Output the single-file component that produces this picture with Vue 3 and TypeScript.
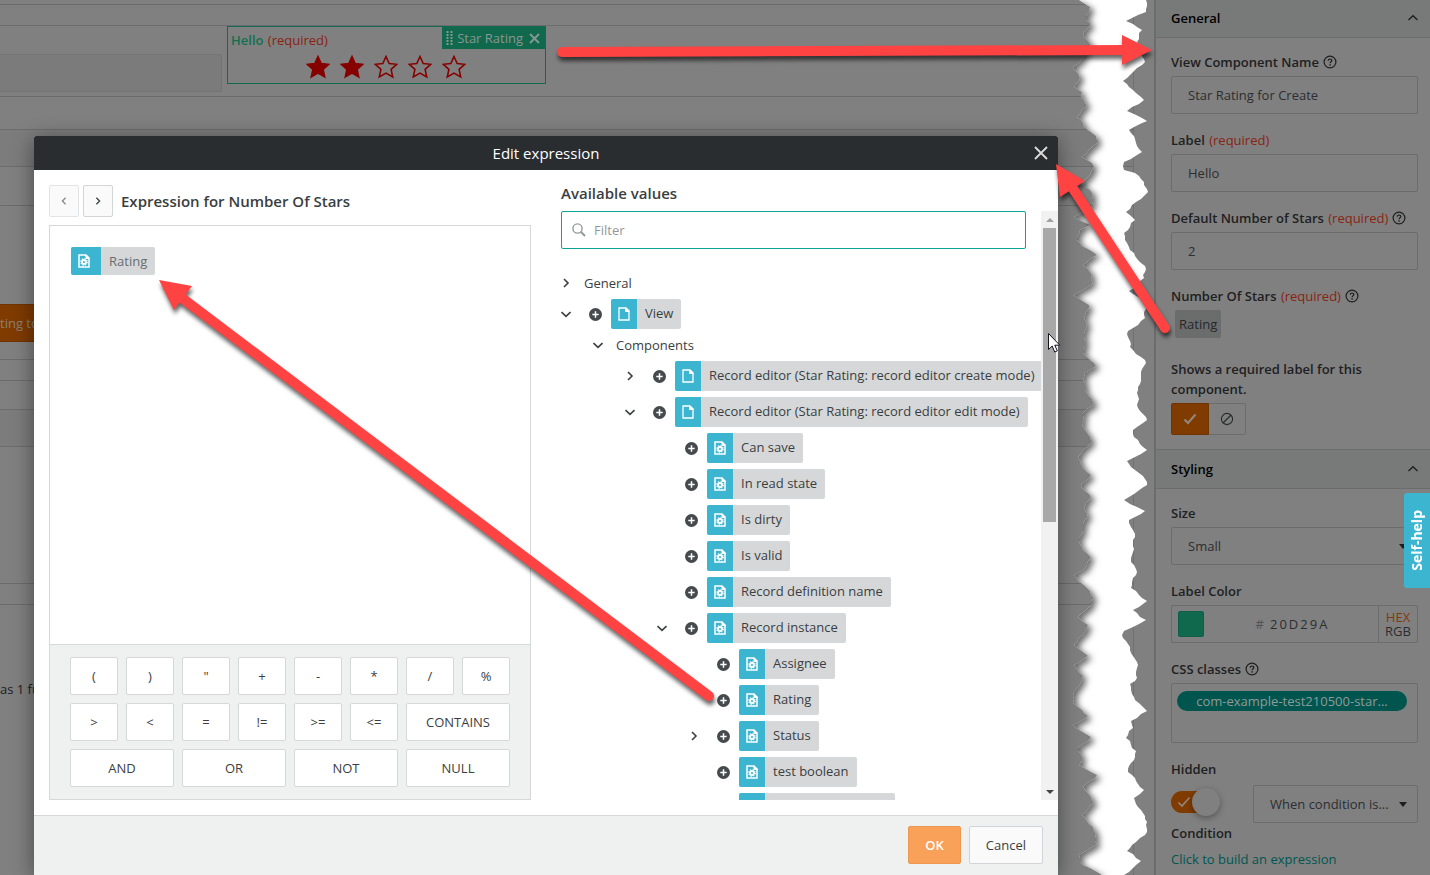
<script setup lang="ts">
import { ref } from 'vue'

type Caret = 'open' | 'closed' | 'none'
type Kind = 'group' | 'page' | 'field'
interface TreeRow {
  label: string
  level: number
  caret: Caret
  kind: Kind
}

const rows: TreeRow[] = [
  { label: 'General', level: 0, caret: 'closed', kind: 'group' },
  { label: 'View', level: 0, caret: 'open', kind: 'page' },
  { label: 'Components', level: 1, caret: 'open', kind: 'group' },
  { label: 'Record editor (Star Rating: record editor create mode)', level: 2, caret: 'closed', kind: 'page' },
  { label: 'Record editor (Star Rating: record editor edit mode)', level: 2, caret: 'open', kind: 'page' },
  { label: 'Can save', level: 3, caret: 'none', kind: 'field' },
  { label: 'In read state', level: 3, caret: 'none', kind: 'field' },
  { label: 'Is dirty', level: 3, caret: 'none', kind: 'field' },
  { label: 'Is valid', level: 3, caret: 'none', kind: 'field' },
  { label: 'Record definition name', level: 3, caret: 'none', kind: 'field' },
  { label: 'Record instance', level: 3, caret: 'open', kind: 'field' },
  { label: 'Assignee', level: 4, caret: 'none', kind: 'field' },
  { label: 'Rating', level: 4, caret: 'none', kind: 'field' },
  { label: 'Status', level: 4, caret: 'closed', kind: 'field' },
  { label: 'test boolean', level: 4, caret: 'none', kind: 'field' },
]

const operators: { text: string; wide: boolean }[] = [
  ...['(', ')', '"', '+', '-', '*', '/', '%', '>', '<', '=', '!=', '>=', '<='].map((text) => ({ text, wide: false })),
  ...['CONTAINS', 'AND', 'OR', 'NOT', 'NULL'].map((text) => ({ text, wide: true })),
]

const stars = [true, true, false, false, false]
const starPath = 'M12 1.5l3.2 7 7.5.8-5.6 5.1 1.6 7.5-6.7-3.8-6.7 3.8 1.6-7.5-5.6-5.1 7.5-.8z'

const filter = ref('')
const componentName = ref('Star Rating for Create')
const labelText = ref('Hello')
const defaultStars = ref('2')
const color = ref('20D29A')
const hidden = ref(true)

type Point = [number, number]

// Edges of the torn strip, measured from the strip's own left side.
const leftEdge: Point[] = [
  [9, 0], [15, 4], [20, 7], [19, 12], [16, 20], [21, 24], [14, 32], [15, 38], [21, 47], [12, 59], [3, 67], [8, 73],
  [10, 78], [4, 87], [12, 92], [11, 97], [17, 106], [12, 110], [7, 117], [13, 123], [18, 130], [26, 136], [27, 143],
  [12, 157], [22, 163], [24, 167], [21, 172], [17, 178], [13, 184], [22, 193], [24, 205], [4, 217], [20, 225],
  [10, 230], [7, 237], [12, 246], [27, 255], [13, 265], [22, 275], [23, 283], [4, 295], [19, 305], [15, 315],
  [16, 328], [13, 353], [26, 366], [15, 373], [13, 380], [17, 393], [24, 405], [13, 413], [12, 423], [20, 437],
  [21, 443], [8, 457], [13, 468], [21, 475], [11, 487], [21, 497], [14, 509], [18, 517], [13, 527], [9, 538],
  [13, 550], [21, 558], [13, 570], [4, 575], [17, 588], [24, 598], [18, 608], [8, 617], [18, 625], [13, 635],
  [4, 645], [18, 656], [4, 665], [13, 676], [4, 692], [3, 703], [12, 710], [18, 716], [3, 725], [21, 737],
  [8, 748], [12, 757], [9, 765], [27, 775], [13, 787], [24, 803], [12, 815], [23, 827], [25, 838], [27, 844],
  [9, 855], [13, 865], [32, 875],
]
const rightEdge: Point[] = [
  [76, 0], [76, 12], [56, 21], [72, 30], [67, 42], [75, 62], [53, 81], [63, 90], [74, 100], [57, 111], [77, 121],
  [59, 130], [72, 152], [54, 162], [54, 170], [65, 173], [74, 182], [78, 192], [56, 212], [65, 220], [54, 233],
  [60, 250], [75, 266], [74, 278], [59, 291], [75, 300], [75, 318], [58, 331], [60, 347], [75, 360], [68, 390],
  [67, 405], [77, 420], [63, 430], [64, 437], [77, 450], [57, 461], [77, 482], [77, 485], [54, 500], [75, 511],
  [59, 520], [65, 537], [61, 558], [67, 572], [61, 588], [77, 601], [63, 610], [76, 620], [54, 631], [52, 635],
  [67, 662], [67, 678], [60, 684], [65, 700], [77, 711], [61, 721], [63, 728], [56, 738], [66, 751], [58, 772],
  [74, 790], [64, 798], [77, 822], [77, 832], [57, 851], [71, 861], [54, 875],
]

// Breaks every segment into short steps with a repeatable wobble, so the paper looks fibrous.
function roughen(edge: Point[]): Point[] {
  const out: Point[] = []
  edge.forEach(([x, y], i) => {
    out.push([x, y])
    const next = edge[i + 1]
    if (!next) return
    const steps = Math.floor((next[1] - y) / 3)
    for (let s = 1; s < steps; s++) {
      const t = s / steps
      const wobble = Math.sin((y + s * 3) * 12.9) * 1.3
      out.push([Math.round(x + (next[0] - x) * t + wobble), Math.round(y + (next[1] - y) * t)])
    }
  })
  return out
}
const toPoints = (list: Point[]) => list.map((p) => p.join(',')).join(' ')
const left = roughen(leftEdge)
const right = roughen(rightEdge)
const paper = toPoints([...left, ...[...right].reverse()])
const leftShade = toPoints([[-30, 0], ...left, [-30, 875]])
</script>

<template>
  <div class="stage">
    <svg class="defs" width="0" height="0" aria-hidden="true">
      <symbol id="page" viewBox="0 0 12 14">
        <path d="M1 1h6.5L11 4.500V13H1z" fill="none" stroke="#fff" stroke-width="1.300" />
        <path d="M7 .5h1.500l3 3v1.500H7z" fill="#fff" />
      </symbol>
      <symbol id="field" viewBox="0 0 12 14">
        <path d="M1 1h6.500L11 4.500V13H1z" fill="none" stroke="#fff" stroke-width="1.500" />
        <path d="M7.500 .5h1l3 3v1.500h-4z" fill="#fff" />
        <circle cx="6" cy="8" r="2" fill="none" stroke="#fff" stroke-width="1.900" />
        <circle cx="6" cy="8" r="3.200" fill="none" stroke="#fff" stroke-width="1.200" stroke-dasharray="1.300 1.213" />
      </symbol>
      <symbol id="help" viewBox="0 0 14 14">
        <circle cx="7" cy="7" r="5.900" fill="none" stroke="#1c1e20" stroke-width="1.200" />
        <path d="M5.200 5.700c0-2.300 3.700-2.200 3.600 0c0 1.100-1.700 1.200-1.700 2.500" fill="none" stroke="#1c1e20" stroke-width="1.200" />
        <rect x="6.400" y="9.200" width="1.400" height="1.400" fill="#1c1e20" />
      </symbol>
      <symbol id="right" viewBox="0 0 10 10"><path d="M3 1l4 4-4 4" fill="none" stroke="currentColor" stroke-width="1.600" /></symbol>
      <symbol id="down" viewBox="0 0 10 10"><path d="M.5 3L5 7.300 9.500 3" fill="none" stroke="currentColor" stroke-width="1.600" /></symbol>
      <symbol id="up" viewBox="0 0 10 10"><path d="M.5 7L5 2.700 9.500 7" fill="none" stroke="#1e2022" stroke-width="1.400" /></symbol>
      <symbol id="plus" viewBox="0 0 13 13">
        <circle cx="6.500" cy="6.500" r="6.500" fill="#464a4e" />
        <path d="M6.500 3.300v6.400M3.300 6.500h6.400" stroke="#fff" stroke-width="1.500" />
      </symbol>
    </svg>

    <main class="canvas">
      <div class="band h5"></div>
      <div class="band h21"></div>
      <div class="band h71 editor">
        <div class="blank-field"></div>
        <section class="component">
          <div class="component-label"><b>Hello</b> <span class="required">(required)</span></div>
          <div class="stars">
            <svg v-for="(on, i) in stars" :key="i" width="24" height="24" viewBox="0 0 24 24">
              <path :d="starPath" :fill="on ? '#860000' : 'none'" stroke="#860000" stroke-width="1.600" />
            </svg>
          </div>
          <div class="tag">
            <svg width="7" height="14" viewBox="0 0 7 14">
              <path d="M1.500 0v14M5.500 0v14" stroke="#7f9a90" stroke-width="2" stroke-dasharray="2 1" />
            </svg>
            <span>Star Rating</span>
            <button type="button" aria-label="Remove component">
              <svg width="11" height="11" viewBox="0 0 11 11"><path d="M1 1l9 9M10 1l-9 9" stroke="#85968f" stroke-width="2" /></svg>
            </button>
          </div>
        </section>
      </div>
      <div class="band h33"></div>
      <div class="band h37 tint"></div>
      <div class="band h39"></div>
      <div class="band h154 action"><button type="button" class="canvas-button">ting to</button></div>
      <div class="band h21"></div>
      <div class="band h29"></div>
      <div class="band h37 tint"></div>
      <div class="band h137"></div>
      <div class="band h21"></div>
      <p class="canvas-note">as 1 fu</p>
    </main>

    <aside class="panel">
      <h2 class="panel-head">
        General <svg width="10" height="10"><use href="#up" /></svg>
      </h2>
      <div class="panel-body">
        <div class="group">
          <div class="label-row"><label for="name">View Component Name</label><svg width="14" height="14"><use href="#help" /></svg></div>
          <input id="name" v-model="componentName" class="box" type="text" />
        </div>
        <div class="group">
          <div class="label-row"><label for="label">Label <span class="required">(required)</span></label></div>
          <input id="label" v-model="labelText" class="box" type="text" />
        </div>
        <div class="group">
          <div class="label-row"><label for="default">Default Number of Stars <span class="required">(required)</span></label><svg width="14" height="14"><use href="#help" /></svg></div>
          <input id="default" v-model="defaultStars" class="box" type="text" />
        </div>
        <div class="group">
          <div class="label-row"><span>Number Of Stars <span class="required">(required)</span></span><svg width="14" height="14"><use href="#help" /></svg></div>
          <button type="button" class="value-chip">Rating</button>
        </div>
        <div class="group last">
          <div class="label-row">Shows a required label for this component.</div>
          <div class="switch">
            <button type="button" class="on" aria-label="Yes">
              <svg width="14" height="12" viewBox="0 0 14 12"><path d="M1.500 6.500L5 10l7.500-8.500" fill="none" stroke="#94877c" stroke-width="2" /></svg>
            </button>
            <button type="button" aria-label="No">
              <svg width="14" height="14" viewBox="0 0 14 14"><circle cx="7" cy="7" r="5.600" fill="none" stroke="#26282a" stroke-width="1.100" /><path d="M3 11l8-8" stroke="#26282a" stroke-width="1.100" /></svg>
            </button>
          </div>
        </div>
      </div>
      <h2 class="panel-head second">
        Styling <svg width="10" height="10"><use href="#up" /></svg>
      </h2>
      <div class="panel-body">
        <div class="group">
          <div class="label-row"><label for="size">Size</label></div>
          <div class="select-wrap">
            <select id="size" class="box"><option>Small</option></select>
            <i class="triangle"></i>
          </div>
        </div>
        <div class="group">
          <div class="label-row"><label for="color">Label Color</label></div>
          <div class="box color">
            <i class="swatch"></i>
            <span class="hash">#</span>
            <input id="color" v-model="color" type="text" />
            <span class="mode"><b>HEX</b><span>RGB</span></span>
          </div>
        </div>
        <div class="group">
          <div class="label-row"><span>CSS classes</span><svg width="14" height="14"><use href="#help" /></svg></div>
          <div class="classes"><span>com-example-test210500-star...</span></div>
        </div>
        <div class="group hidden-group">
          <div class="label-row"><label for="hidden">Hidden</label></div>
          <div class="hidden-row">
            <span class="toggle">
              <input id="hidden" v-model="hidden" type="checkbox" />
              <svg width="14" height="12" viewBox="0 0 14 12"><path d="M1.500 6.500L5 10l7.500-8.500" fill="none" stroke="#94877c" stroke-width="1.600" /></svg>
              <i class="knob"></i>
            </span>
            <div class="select-wrap when">
              <select class="box" aria-label="Hidden mode"><option>When condition is...</option></select>
              <i class="triangle"></i>
            </div>
          </div>
        </div>
        <div class="label-row condition">Condition</div>
        <a class="link" href="#">Click to build an expression</a>
      </div>
    </aside>

    <svg class="torn" width="80" height="875" viewBox="0 0 80 875" aria-hidden="true">
      <defs>
        <clipPath id="paper-clip"><polygon :points="paper" /></clipPath>
        <filter id="soft" x="-40%" y="-5%" width="180%" height="110%"><feGaussianBlur stdDeviation="3" /></filter>
      </defs>
      <g clip-path="url(#paper-clip)">
        <rect width="80" height="875" fill="#fff" />
        <polygon :points="leftShade" fill="#6c6c6c" filter="url(#soft)" transform="translate(4 3)" />
      </g>
    </svg>

    <section class="dialog" role="dialog" aria-labelledby="dialog-title">
      <header class="dialog-head">
        <h1 id="dialog-title">Edit expression</h1>
        <button type="button" aria-label="Close">
          <svg width="14" height="14" viewBox="0 0 14 14"><path d="M1 1l12 12M13 1L1 13" stroke="#dcddde" stroke-width="1.800" /></svg>
        </button>
      </header>

      <div class="dialog-body">
        <div class="expression">
          <div class="expression-head">
            <button type="button" class="step off" aria-label="Previous"><svg class="flip" width="8" height="8"><use href="#right" /></svg></button>
            <button type="button" class="step" aria-label="Next"><svg width="8" height="8"><use href="#right" /></svg></button>
            <h3>Expression for Number Of Stars</h3>
          </div>
          <div class="work">
            <div class="drop">
              <span class="chip small"><span class="chip-icon"><svg width="12" height="14"><use href="#field" /></svg></span><span class="chip-label">Rating</span></span>
            </div>
            <div class="operators">
              <button v-for="op in operators" :key="op.text" type="button" :class="{ wide: op.wide }">{{ op.text }}</button>
            </div>
          </div>
        </div>

        <div class="available">
          <h3>Available values</h3>
          <div class="scroll">
            <div class="scroll-content">
              <div class="filter">
                <svg width="14" height="14" viewBox="0 0 14 14"><circle cx="5.500" cy="5.500" r="4.600" fill="none" stroke="#95989a" stroke-width="1.400" /><path d="M9 9l4 4" stroke="#95989a" stroke-width="2" /></svg>
                <input v-model="filter" type="text" placeholder="Filter" aria-label="Filter" />
              </div>
              <ul class="tree">
                <li v-for="row in rows" :key="row.label" :class="'level' + row.level">
                  <button v-if="row.caret !== 'none'" type="button" class="caret" :aria-label="'Toggle ' + row.label">
                    <svg width="10" height="10"><use :href="row.caret === 'open' ? '#down' : '#right'" /></svg>
                  </button>
                  <i v-else class="caret"></i>
                  <span v-if="row.kind === 'group'" class="group-label">{{ row.label }}</span>
                  <template v-else>
                    <button type="button" class="add" :aria-label="'Add ' + row.label"><svg width="13" height="13"><use href="#plus" /></svg></button>
                    <span class="chip"><span class="chip-icon"><svg width="12" height="14"><use :href="'#' + row.kind" /></svg></span><span class="chip-label">{{ row.label }}</span></span>
                  </template>
                </li>
                <li class="level4">
                  <i class="caret"></i><i class="add"></i>
                  <span class="chip cut"><span class="chip-icon"></span></span>
                </li>
              </ul>
            </div>
            <div class="scrollbar" aria-hidden="true">
              <i class="arrow up"></i>
              <div class="track"><div class="thumb"></div></div>
              <i class="arrow down"></i>
            </div>
          </div>
        </div>
      </div>

      <footer class="dialog-foot">
        <button type="button" class="ok">OK</button>
        <button type="button" class="cancel">Cancel</button>
      </footer>
    </section>

    <button type="button" class="self-help"><span>Self-help</span></button>

    <svg class="notes" aria-hidden="true">
      <g class="arrow-mark">
        <path d="M562 52L1126 50" />
        <polygon points="1152,50 1122,35 1122,65" />
      </g>
      <g class="arrow-mark">
        <path d="M1165 328L1070 184" />
        <polygon points="1056,164 1085,181 1060,197" />
      </g>
      <g class="arrow-mark">
        <path d="M709 696L182 298" />
        <polygon points="159,280 192,286 174,310" />
      </g>
      <path d="M1048.500 333.500v16l3.700-3.500 2.500 6 2.600-1.100-2.500-5.700h5z" fill="#fff" stroke="#15151f" stroke-width="1" />
    </svg>
  </div>
</template>

<style>
body {
  margin: 0;
}
</style>

<style scoped>
* {
  box-sizing: border-box;
}
.stage {
  position: relative;
  display: flex;
  min-height: 100vh;
  overflow: hidden;
  background: #808080;
  font: 13px/20px "Open Sans", "Noto Sans", sans-serif;
  color: #3a3e41;
}
button,
input,
select {
  font: inherit;
  color: inherit;
}
button {
  padding: 0;
  border: 0;
  background: none;
}
h1,
h2,
h3,
p,
ul {
  margin: 0;
  padding: 0;
}
svg {
  display: block;
  flex: none;
}
i {
  display: block;
}
.defs,
.torn,
.notes {
  position: absolute;
  top: 0;
}
.required {
  margin-left: 1px;
  color: #8a2310;
  font-weight: 400;
}

/* canvas behind the dialog */
.canvas {
  flex: 1;
  margin-right: 20px;
  border-right: 1px solid #707172;
}
.band {
  border-bottom: 1px solid #6b6c6d;
}
.tint {
  background: #7c7c7c;
}
.h5 { height: 5px; }
.h21 { height: 21px; }
.h29 { height: 29px; }
.h33 { height: 33px; }
.h37 { height: 37px; }
.h39 { height: 39px; }
.h71 { height: 71px; }
.h137 { height: 137px; }
.h154 { height: 154px; }
.editor {
  display: flex;
  gap: 5px;
}
.blank-field {
  width: 222px;
  height: 38px;
  margin-top: 28px;
  border: 1px solid #747474;
  border-left: 0;
  border-radius: 0 2px 2px 0;
  background: #7b7b7b;
}
.component {
  position: relative;
  width: 319px;
  height: 58px;
  padding: 3px 4px 0 3px;
  border: 1px solid #126b4f;
}
.component-label {
  color: #12704f;
}
.component-label b {
  font-weight: 600;
}
.stars {
  display: flex;
  justify-content: center;
  gap: 10px;
  margin-top: 5px;
}
.tag {
  position: absolute;
  top: 0;
  right: 0;
  display: flex;
  align-items: center;
  gap: 4px;
  height: 22px;
  padding: 0 5px 0 4px;
  background: #10694d;
  color: #8a9691;
}
.tag button {
  margin-left: 2px;
}
.action {
  display: flex;
  align-items: flex-end;
  padding-bottom: 17px;
}
.canvas-button {
  width: 120px;
  height: 38px;
  border: 1px solid #6f3400;
  border-left: 0;
  background: #7f3b00;
  color: #8c8077;
  text-align: left;
}
.canvas-note {
  padding-top: 74px;
  color: #1c1e20;
}

/* properties panel */
.panel {
  width: 276px;
  border-left: 2px solid #6b6c6d;
  color: #1e2022;
}
.panel-head {
  display: flex;
  align-items: center;
  justify-content: space-between;
  height: 38px;
  padding: 0 12px 2px 15px;
  border-bottom: 1px solid #6b6c6d;
  background: #777a79;
  color: #000;
  font-size: 13px;
  font-weight: 600;
}
.panel-head.second {
  height: 40px;
  padding-bottom: 0;
  border-top: 1px solid #6b6c6d;
}
.panel-body {
  padding: 14px 12px 0 15px;
}
.group {
  margin-bottom: 16px;
}
.group.last {
  margin: 21px 0 14px;
}
.label-row {
  display: flex;
  align-items: center;
  gap: 4px;
  margin-bottom: 4px;
  font-weight: 600;
}
.box {
  display: block;
  width: 100%;
  height: 38px;
  padding: 0 16px;
  border: 1px solid #6b6c6e;
  border-radius: 2px;
  background: transparent;
  color: #2c2e30;
  outline: 0;
}
.value-chip {
  display: block;
  height: 28px;
  margin-left: 4px;
  padding: 0 4px;
  border-radius: 2px;
  background: #6b6d6d;
  color: #26282a;
}
.switch {
  display: flex;
}
.switch button {
  display: grid;
  place-items: center;
  width: 37px;
  height: 32px;
  border: 1px solid #6b6c6e;
  border-left: 0;
  border-radius: 0 2px 2px 0;
}
.switch .on {
  width: 38px;
  border: 1px solid #6f3400;
  border-radius: 2px 0 0 2px;
  background: #803c00;
}
.select-wrap {
  position: relative;
}
select {
  appearance: none;
}
.triangle {
  position: absolute;
  right: 11px;
  top: 17px;
  border: 4px solid transparent;
  border-top: 5px solid #1c1e20;
  border-bottom: 0;
}
.color {
  display: flex;
  align-items: center;
  padding: 0 0 0 6px;
}
.swatch {
  width: 26px;
  height: 26px;
  border: 1px solid #0d5f46;
  border-radius: 2px;
  background: #10694d;
}
.hash {
  flex: 1;
  padding-right: 6px;
  color: #505254;
  text-align: right;
}
.color input {
  width: 108px;
  padding: 0;
  border: 0;
  outline: 0;
  background: transparent;
  letter-spacing: 2px;
}
.mode {
  display: flex;
  flex-direction: column;
  justify-content: center;
  width: 39px;
  height: 100%;
  border-left: 1px solid #6b6c6e;
  line-height: 14px;
  text-align: center;
}
.mode b {
  color: #86380a;
  font-weight: 400;
}
.classes {
  height: 60px;
  padding: 7px 5px;
  border: 1px solid #6b6c6e;
  border-radius: 2px;
}
.classes span {
  display: block;
  width: 230px;
  border-radius: 10px;
  background: #00564f;
  color: #8f9a98;
  font-weight: 500;
  text-align: center;
}
.hidden-group {
  margin-bottom: 0;
}
.hidden-group .label-row {
  margin-bottom: 6px;
}
.hidden-row {
  display: flex;
  justify-content: space-between;
}
.toggle {
  position: relative;
  display: flex;
  align-items: center;
  width: 48px;
  height: 22px;
  margin-top: 6px;
  padding-left: 6px;
  border-radius: 11px;
  background: #803c00;
}
.toggle input {
  position: absolute;
  inset: 0;
  width: 100%;
  height: 100%;
  margin: 0;
  opacity: 0;
}
.knob {
  position: absolute;
  top: -3px;
  right: -1px;
  width: 28px;
  height: 28px;
  border-radius: 50%;
  background: #808080;
  box-shadow: 0 2px 6px rgba(0, 0, 0, 0.35);
}
.when {
  width: 165px;
}
.condition {
  margin-bottom: 6px;
}
.link {
  color: #00564f;
  text-decoration: none;
}

/* torn strip and arrows lie over the page */
.torn {
  right: 280px;
}
.notes {
  left: 0;
  width: 100%;
  height: 100%;
  pointer-events: none;
}
.arrow-mark {
  fill: #ff4343;
  filter: drop-shadow(1px 4px 2px rgba(0, 0, 0, 0.6));
}
.arrow-mark path {
  stroke: #ff4343;
  stroke-width: 10px;
  stroke-linecap: round;
}

/* dialog */
.dialog {
  position: absolute;
  top: 136px;
  right: 372px;
  bottom: 0;
  left: 34px;
  display: flex;
  flex-direction: column;
  border-radius: 2px 2px 0 0;
  background: #fff;
  box-shadow: 0 4px 22px rgba(0, 0, 0, 0.45);
}
.dialog-head {
  position: relative;
  display: flex;
  align-items: center;
  justify-content: center;
  height: 34px;
  border-radius: 2px 2px 0 0;
  background: #292d30;
  color: #fff;
}
.dialog-head h1 {
  font-size: 15px;
  font-weight: 500;
}
.dialog-head button {
  position: absolute;
  top: 10px;
  right: 10px;
}
.dialog-body {
  flex: 1;
  display: grid;
  grid-template-columns: 482fr 497fr;
  gap: 30px;
  min-height: 0;
  padding: 15px 0 15px 15px;
}
h3 {
  font-size: 15px;
  font-weight: 600;
}
.expression,
.available {
  display: flex;
  flex-direction: column;
  min-width: 0;
  min-height: 0;
}
.expression-head {
  display: flex;
  align-items: center;
  gap: 4px;
  margin-bottom: 8px;
}
.expression-head h3 {
  margin-left: 4px;
}
.step {
  display: grid;
  place-items: center;
  width: 30px;
  height: 32px;
  border: 1px solid #d2d4d8;
  border-radius: 2px;
  background: #fafafa;
}
.step.off {
  border-color: #e3e4e6;
  color: #85888b;
}
.flip {
  transform: scaleX(-1);
}
.work {
  flex: 1;
  display: flex;
  flex-direction: column;
  border: 1px solid #d6d7d9;
}
.drop {
  flex: 1;
  padding: 21px;
}
.operators {
  display: grid;
  grid-template-columns: repeat(8, 1fr);
  gap: 8px;
  padding: 12px 20px;
  border-top: 1px solid #d6d7d9;
  background: #eff1f1;
}
.operators button {
  height: 38px;
  border: 1px solid #d6d7db;
  border-radius: 2px;
  background: #fff;
}
.operators .wide {
  grid-column: span 2;
}
.chip {
  display: inline-flex;
  flex: none;
  height: 30px;
  border-radius: 2px;
  overflow: hidden;
  background: #d6d7d9;
  white-space: nowrap;
}
.chip-icon {
  display: grid;
  place-items: center;
  width: 26px;
  background: #3cb5d0;
}
.chip-label {
  padding: 0 8px;
  line-height: 29px;
}
.chip.small {
  height: 28px;
  color: #6a6d70;
}
.small .chip-icon {
  width: 30px;
  padding-right: 4px;
}
.chip.cut {
  width: 156px;
}
.available h3 {
  margin-bottom: 10px;
  line-height: 16px;
}
.scroll {
  flex: 1;
  display: flex;
  min-height: 0;
}
.scroll-content {
  flex: 1;
  min-width: 0;
  overflow: hidden;
}
.filter {
  display: flex;
  align-items: center;
  gap: 8px;
  height: 38px;
  margin-right: 15px;
  padding: 0 10px;
  border: 1px solid #0ba597;
  border-radius: 2px;
}
.filter input {
  flex: 1;
  min-width: 0;
  padding: 0;
  border: 0;
  outline: 0;
  background: transparent;
}
.filter input::placeholder {
  color: #95989a;
  opacity: 1;
}
.tree {
  display: flex;
  flex-direction: column;
  gap: 6px;
  margin-top: 24px;
  list-style: none;
}
.tree li {
  display: flex;
  align-items: center;
}
.level1 { padding-left: 32px; }
.level2 { padding-left: 64px; }
.level3 { padding-left: 96px; }
.level4 { padding-left: 128px; }
.caret {
  flex: none;
  width: 10px;
}
.group-label {
  margin-left: 13px;
}
.add {
  flex: none;
  width: 13px;
  margin: 0 9px 0 18px;
}
.scrollbar {
  flex: none;
  display: flex;
  flex-direction: column;
  width: 17px;
  background: #f1f1f1;
}
.track {
  flex: 1;
}
.thumb {
  height: 53%;
  margin: 0 2px;
  background: #a8a8a8;
}
.arrow {
  height: 17px;
  display: grid;
  place-items: center;
}
.arrow::after {
  content: "";
  border: 4px solid transparent;
}
.arrow.up::after {
  border-top: 0;
  border-bottom-color: #a0a0a0;
}
.arrow.down::after {
  border-bottom: 0;
  border-top-color: #444;
}
.dialog-foot {
  display: flex;
  justify-content: flex-end;
  gap: 8px;
  height: 60px;
  padding: 10px 15px;
  border-top: 1px solid #d6d8d9;
  background: #eff1f0;
}
.dialog-foot button {
  height: 38px;
  padding: 0 16px;
  border: 1px solid #d2d4d8;
  border-radius: 2px;
  background: #fafafa;
}
.dialog-foot .ok {
  border-color: #ec9850;
  background: #faa159;
  color: #fff;
  font-weight: 600;
}
.self-help {
  position: absolute;
  top: 493px;
  right: 0;
  display: grid;
  place-items: center;
  width: 26px;
  height: 95px;
  border-radius: 3px 0 0 3px;
  background: #3cb5d0;
  color: #fff;
  font-size: 14px;
  font-weight: 700;
}
.self-help span {
  line-height: 22px;
  writing-mode: vertical-rl;
  transform: rotate(180deg);
}
</style>
